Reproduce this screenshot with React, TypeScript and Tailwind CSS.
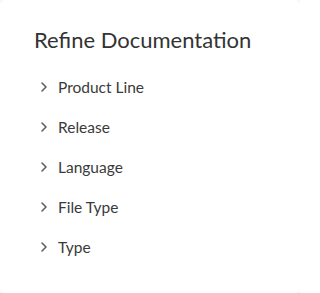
import React from 'react';

const facets = ['Product Line', 'Release', 'Language', 'File Type', 'Type'];

const Chevron = () => (
  <svg width="8" height="12" viewBox="0 0 8 12" className="shrink-0">
    <path d="M2 2 L6 6 L2 10" fill="none" stroke="#5f5f5f" strokeWidth="1.6" strokeLinecap="round" strokeLinejoin="round" />
  </svg>
);

export default function App() {
  return (
    <div className="min-h-[293px] w-[300px] bg-[#f9f9f9]" style={{ fontFamily: 'Lato, "Open Sans", sans-serif' }}>
      <div className="h-[293px] w-[300px] rounded-md bg-white pt-[26px] pl-[34px]">
        <h2 className="text-[22px] leading-[28px] text-[#333333]">Refine Documentation</h2>
        <ul className="mt-[23px] flex flex-col gap-[20px] pl-[6px]">
          {facets.map((f) => (
            <li key={f} className="flex h-[20px] items-center gap-[10px]">
              <Chevron />
              <span className="text-[15.5px] leading-[20px] text-[#3a3a3a]">{f}</span>
            </li>
          ))}
        </ul>
      </div>
    </div>
  );
}
